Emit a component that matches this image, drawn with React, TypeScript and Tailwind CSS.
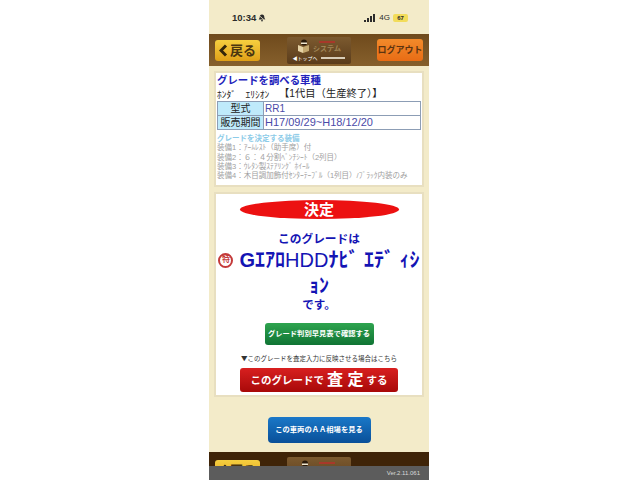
const jp = { fontFamily: '"Liberation Sans", "Noto Sans CJK JP", sans-serif' };

const BackButton = () => (
  <div className="flex h-[21px] w-[45px] shrink-0 items-center justify-center gap-[2px] rounded-[3px] bg-gradient-to-b from-[#f6cf3f] to-[#e0a015]">
    <svg width="9" height="13" viewBox="0 0 9 13">
      <path d="M7 1.5 2 6.5l5 5" fill="none" stroke="#33260a" strokeWidth="3" />
    </svg>
    <span className="text-[13px] leading-none font-bold text-[#4a3510]">戻る</span>
  </div>
);

const TopLogo = () => (
  <div className="flex h-[27px] w-[64px] shrink-0 flex-col items-center rounded-[2px] bg-gradient-to-b from-[#7c5a2f] to-[#5a3c1b]">
    <div className="flex h-[18px] items-center gap-[2px] pt-[2px]">
      <svg width="15" height="15" viewBox="0 0 15 15">
        <path d="M2 6l5 2v6l-5-2z" fill="#e6d2a4" />
        <path d="M7 8l6-2v6l-6 2z" fill="#c4a870" />
        <circle cx="8" cy="3.5" r="3" fill="#2a1a0a" />
        <path d="M5 3.5h6v1.5H5z" fill="#f1e7cf" />
      </svg>
      <div className="flex flex-col items-center">
        <span className="h-[2px] w-[16px] bg-[#a8382a]" />
        <span className="mt-[2px] text-[7px] leading-none font-bold text-[#a08556]">システム</span>
      </div>
    </div>
    <div className="mt-[1px] flex items-center gap-[3px] text-[5px] leading-none text-white">
      <span>◀トップへ</span>
      <span className="h-[2px] w-[24px] bg-[#d8cdb8]" />
    </div>
  </div>
);

const NavBar = () => (
  <div className="flex h-[32px] shrink-0 items-center justify-between bg-gradient-to-b from-[#6f4a1c] to-[#86602c] pr-[6px] pl-[6px]">
    <BackButton />
    <TopLogo />
    <div className="flex h-[22px] w-[46px] shrink-0 items-center justify-center rounded-[3px] bg-gradient-to-b from-[#f28a2a] to-[#e96c14]">
      <span className="text-[9px] leading-none font-bold whitespace-nowrap text-[#5c3410]">ログアウト</span>
    </div>
  </div>
);

const StatusBar = () => (
  <div className="flex h-[34px] shrink-0 items-center justify-between pt-[2px] pr-[21px] pl-[23px] text-[#2b2b2b]">
    <div className="flex items-center gap-[2px]">
      <span className="text-[9.5px] font-semibold">10:34</span>
      <svg width="8" height="8" viewBox="0 0 8 8">
        <path d="M4 .5c1.6 0 2.3 1.2 2.3 2.6 0 1 .5 1.7 1 2.4H.7c.5-.7 1-1.4 1-2.4C1.700 1.700 2.400.5 4 .5z" fill="#2b2b2b" />
        <path d="M3 6.300h2v1H3z" fill="#2b2b2b" />
        <path d="M.5 1l7 6" stroke="#f3ebc9" strokeWidth="0.8" />
      </svg>
    </div>
    <div className="flex items-center gap-[3px]">
      <svg width="12" height="8" viewBox="0 0 12 8">
        <path d="M0 6h2v2H0zM3 4h2v4H3zM6 2h2v6H6zM9 0h2v8H9z" fill="#2b2b2b" />
      </svg>
      <span className="text-[8px] leading-none">4G</span>
      <span className="flex h-[8px] w-[15px] items-center justify-center rounded-[2px] bg-[#f2dc5a] text-[6px] leading-none font-bold">
        67
      </span>
    </div>
  </div>
);

const equipment = [
  "装備1：ｱｰﾑﾚｽﾄ（助手席）付",
  "装備2：６：４分割ﾍﾞﾝﾁｼｰﾄ（2列目）",
  "装備3：ｳﾚﾀﾝ製ｽﾃｱﾘﾝｸﾞ ﾎｲｰﾙ",
  "装備4：木目調加飾付ｾﾝﾀｰﾃｰﾌﾞﾙ（1列目）/ﾌﾞﾗｯｸ内装のみ",
];

const VehicleCard = () => (
  <div className="flex h-[116px] shrink-0 flex-col border-2 border-[#e8dfc0] bg-white px-[1px] pt-[1px]">
    <div className="text-[10.4px] leading-[14px] font-bold text-[#2222bb]">グレードを調べる車種</div>
    <div className="flex h-[13px] items-center whitespace-nowrap text-[10.3px] leading-none text-[#222]">
      <span className="w-[62px] text-[9.5px]">ﾎﾝﾀﾞ　ｴﾘｼｵﾝ</span>
      <span>【1代目（生産終了）】</span>
    </div>
    <div className="mb-[4px] text-[10px] leading-none">
      <div className="flex h-[15px] border border-[#8c9db5]">
        <div className="flex w-[46px] items-center justify-center border-r border-[#8c9db5] bg-[#bfeafb] text-[#222]">型式</div>
        <div className="flex items-center pl-[1px] text-[#4a4aa8]">RR1</div>
      </div>
      <div className="-mt-px flex h-[15px] border border-[#8c9db5]">
        <div className="flex w-[46px] items-center justify-center border-r border-[#8c9db5] bg-[#bfeafb] text-[#222]">販売期間</div>
        <div className="flex items-center pl-[1px] text-[11px] whitespace-nowrap text-[#4a4aa8]">H17/09/29~H18/12/20</div>
      </div>
    </div>
    <div className="text-[7.5px] leading-[9.25px] font-bold text-[#8ccbe8]">グレードを決定する装備</div>
    {equipment.map((item) => (
      <div key={item} className="text-[7.5px] leading-[9.25px] whitespace-nowrap text-[#a0a0a0]">
        {item}
      </div>
    ))}
  </div>
);

const ResultCard = () => (
  <div className="flex h-[205px] shrink-0 flex-col items-center border-2 border-[#e8dfc0] bg-white">
    <div className="mt-[6px] flex h-[19px] w-[159px] items-center justify-center rounded-[50%] bg-[#ec1111] text-[15px] leading-none font-bold text-white">
      決定
    </div>
    <div className="mt-[12px] text-[11.7px] leading-[16px] font-bold text-[#1414b4]">このグレードは</div>
    <div className="flex w-full items-center justify-center gap-[6px]">
      <span className="flex h-[15px] w-[15px] shrink-0 items-center justify-center rounded-full border-2 border-[#c43a3a] text-[8px] leading-none font-bold text-[#c43a3a]">
        特
      </span>
      <span className="text-[20px] leading-[26px] font-bold whitespace-nowrap text-[#1414b4]">
        Gｴｱﾛ<span className="font-normal">HDD</span>ﾅﾋﾞ ｴﾃﾞ ｨｼ
      </span>
    </div>
    <div className="mt-[3px] text-[20px] leading-[21px] font-bold text-[#1414b4]">ｮﾝ</div>
    <div className="text-[11.5px] leading-[17px] font-bold text-[#1414b4]">です。</div>
    <div className="mt-[9px] flex h-[22px] w-[109px] items-center justify-center rounded-[3px] bg-gradient-to-b from-[#2ea44f] to-[#0f7434] text-[7.3px] leading-none font-bold whitespace-nowrap text-white">
      グレード判別早見表で確認する
    </div>
    <div className="mt-[8px] text-[6.5px] leading-[10px] whitespace-nowrap text-[#333]">
      <span className="font-['Noto_Sans_CJK_JP']">▼</span>このグレードを査定入力に反映させる場合はこちら
    </div>
    <div className="mt-[4px] flex h-[24px] w-[158px] items-center justify-center rounded-[3px] bg-gradient-to-b from-[#d81f1f] to-[#a80808] leading-none font-bold whitespace-nowrap text-white">
      <span className="text-[10.5px]">このグレードで</span>
      <span className="mx-[3px] text-[16px]">査 定</span>
      <span className="text-[10.5px]">する</span>
    </div>
  </div>
);

export default function App() {
  return (
    <div className="flex h-[480px] w-[640px] overflow-hidden bg-white pl-[209px]" style={jp}>
      <div className="relative flex h-[480px] w-[220px] flex-col overflow-hidden bg-[#f3ebc9]">
        <StatusBar />
        <NavBar />
        <div className="flex flex-col gap-[5px] px-[5px] pt-[5px]">
          <VehicleCard />
          <ResultCard />
        </div>
        <div className="mt-[20px] flex justify-center">
          <div className="flex h-[26px] w-[103px] items-center justify-center rounded-[4px] bg-gradient-to-b from-[#1a78c8] to-[#0a5099] text-[7.3px] leading-none font-bold whitespace-nowrap text-white">
            この車両のＡＡ相場を見る
          </div>
        </div>
        <div className="mt-[9px] flex h-[28px] shrink-0 items-start gap-[27px] bg-[#3f2408] pl-[6px]">
          <div className="mt-[8px]">
            <BackButton />
          </div>
          <div className="mt-[5px]">
            <TopLogo />
          </div>
        </div>
        <div className="absolute right-0 bottom-0 left-0 flex h-[14px] items-center justify-end bg-[#5c5c5c] pr-[9px] text-[6px] leading-none text-[#d8d8d8]">
          Ver.2.11.061
        </div>
      </div>
    </div>
  );
}
